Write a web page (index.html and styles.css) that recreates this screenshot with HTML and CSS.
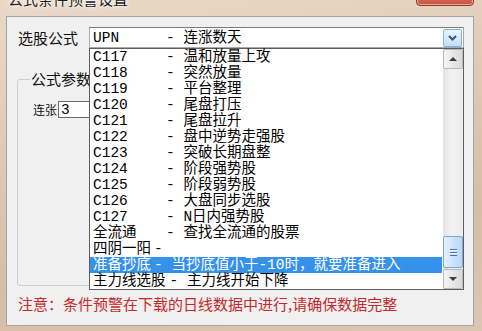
FILE: index.html
```html
<!DOCTYPE html>
<html lang="zh-CN">

<head>
  <meta charset="UTF-8">
  <title>公式条件预警设置</title>
  <link rel="stylesheet" href="styles.css">
</head>

<body>
  <div class="frame">
    <div class="titlebar">
      <span class="title">公式条件预警设置</span>
      <span class="close"></span>
    </div>

    <div class="client">
      <div class="formula-row">
        <span class="label">选股公式</span>
        <div class="combo">
          <span class="value"><span class="n">UPN</span>- 连涨数天</span>
          <span class="drop-btn">
            <svg width="9" height="6" viewBox="0 0 9 6"><path d="M1 1 L4.5 4.5 L8 1" fill="none" stroke="#3b5178" stroke-width="2"/></svg>
          </span>

          <div class="droplist">
            <ul class="items">
              <li><span class="n">C117</span>- 温和放量上攻</li>
              <li><span class="n">C118</span>- 突然放量</li>
              <li><span class="n">C119</span>- 平台整理</li>
              <li><span class="n">C120</span>- 尾盘打压</li>
              <li><span class="n">C121</span>- 尾盘拉升</li>
              <li><span class="n">C122</span>- 盘中逆势走强股</li>
              <li><span class="n">C123</span>- 突破长期盘整</li>
              <li><span class="n">C124</span>- 阶段强势股</li>
              <li><span class="n">C125</span>- 阶段弱势股</li>
              <li><span class="n">C126</span>- 大盘同步选股</li>
              <li><span class="n">C127</span>- N日内强势股</li>
              <li><span class="n">全流通</span>- 查找全流通的股票</li>
              <li><span class="n free">四阴一阳</span>-</li>
              <li class="selected"><span class="n free">准备抄底</span>- 当抄底值小于-10时，就要准备进入</li>
              <li><span class="n free wide">主力线选股</span>- 主力线开始下降</li>
            </ul>
            <div class="scroll">
              <span class="sbtn"><span class="arrow up"></span></span>
              <div class="track">
                <span class="thumb"><span class="grip"></span></span>
              </div>
              <span class="sbtn"><span class="arrow down"></span></span>
            </div>
          </div>
        </div>
      </div>

      <fieldset class="params">
        <legend>公式参数</legend>
        <div class="param-row">
          <span class="small-label">连张</span>
          <input type="text" class="param-input" value="3">
        </div>
      </fieldset>

      <p class="note">注意：条件预警在下载的日线数据中进行,请确保数据完整</p>
    </div>
  </div>
</body>

</html>
```

FILE: styles.css
```css
body {
  margin: 0;
  width: 482px;
  height: 331px;
  overflow: hidden;
  font-family: "Noto Sans CJK SC", sans-serif;
  background: linear-gradient(170deg, #ead9c7 0%, #dfc8b4 40%, #d6bda7 70%, #dcc6b3 100%);
}

.frame {
  padding: 0 8px 0 6px;
}

.titlebar {
  height: 16px;
  display: flex;
  justify-content: space-between;
  align-items: flex-start;
}

.title {
  margin: -9px 0 0 2px;
  font-size: 15px;
  line-height: 16px;
  color: #1c1c1c;
  text-shadow: 0 0 6px #fff, 0 0 3px #fff;
}

.close {
  width: 58px;
  height: 20px;
  margin-top: -14px;
  box-sizing: border-box;
  border: 1px solid #8c3a2c;
  border-radius: 0 0 4px 4px;
  background: linear-gradient(#e08c74, #c9533e);
  box-shadow: inset 0 0 0 1px #eaa995;
}

.client {
  height: 310px;
  box-sizing: border-box;
  border: 1px solid #a4a4a4;
  background: #f0f0f0;
  padding: 10px 0 0 11px;
}

.formula-row {
  display: flex;
  align-items: center;
  gap: 11px;
}

.label {
  font-size: 15px;
  line-height: 16px;
  width: 60px;
  color: #111;
}

.combo {
  position: relative;
  width: 375px;
  height: 21px;
  box-sizing: border-box;
  border: 1px solid #a9a9a9;
  border-top-color: #7c7c7c;
  background: #fff;
  display: flex;
  align-items: center;
}

.value,
.items li {
  font-family: "Liberation Mono", "Noto Sans CJK SC", monospace;
  font-size: 14.5px;
  line-height: 16px;
  white-space: pre;
  color: #000;
}

.value {
  flex: 1;
  padding-left: 3px;
  display: flex;
}

.n {
  width: 73px;
}

.n.free {
  width: auto;
  margin-right: 3px;
}

.n.wide {
  margin-right: 4px;
}

.drop-btn {
  width: 19px;
  height: 18px;
  margin-right: 1px;
  box-sizing: border-box;
  border: 1px solid #7fb1e0;
  border-radius: 2px;
  background: linear-gradient(#eaf5fe, #c3dff7);
  display: flex;
  align-items: center;
  justify-content: center;
}

.droplist {
  position: absolute;
  top: 20px;
  left: -1px;
  width: 375px;
  height: 242px;
  box-sizing: border-box;
  border: 1px solid #5e5e5e;
  background: #fff;
  display: flex;
  z-index: 2;
}

.items {
  flex: 1;
  margin: 0;
  padding: 0;
  list-style: none;
}

.items li {
  height: 16px;
  padding-left: 3px;
  display: flex;
}

.items li.selected {
  background: #3591ea;
  color: #fff;
  margin-right: 1px;
}

.scroll {
  width: 20px;
  display: flex;
  flex-direction: column;
  background: linear-gradient(90deg, #e2e2e2, #f2f2f2 40%, #ececec);
}

.sbtn {
  height: 20px;
  box-sizing: border-box;
  border: 1px solid #b9b9b9;
  border-radius: 2px;
  background: linear-gradient(90deg, #f5f5f5, #e4e4e4 60%, #d9d9d9);
  display: flex;
  align-items: center;
  justify-content: center;
}

.arrow {
  width: 0;
  height: 0;
  border-left: 4px solid transparent;
  border-right: 4px solid transparent;
}

.arrow.up {
  border-bottom: 4px solid #3c3c3c;
}

.arrow.down {
  border-top: 4px solid #3c3c3c;
}

.track {
  flex: 1;
  display: flex;
  flex-direction: column;
  justify-content: flex-end;
  padding-bottom: 1px;
}

.thumb {
  height: 32px;
  box-sizing: border-box;
  border: 1px solid #7fa6d2;
  border-radius: 2px;
  background: linear-gradient(90deg, #e4f2fd, #cbe4f9 50%, #b7d8f5);
  display: flex;
  align-items: center;
  justify-content: center;
}

.grip {
  width: 7px;
  height: 7px;
  background: repeating-linear-gradient(#4d6fa3 0 1px, #eef7ff 1px 2px, transparent 2px 3px);
}

.params {
  margin: 23px 0 0 -1px;
  width: 438px;
  height: 215px;
  box-sizing: border-box;
  border: 1px solid #c7cfd5;
  border-radius: 3px;
  padding: 14px 0 0 15px;
}

.params legend {
  margin-left: -3px;
  padding: 0 1px;
  font-size: 15px;
  line-height: 16px;
  color: #111;
}

.param-row {
  display: flex;
  align-items: center;
  gap: 1px;
}

.small-label {
  font-size: 12px;
  line-height: 16px;
  color: #111;
}

.param-input {
  width: 60px;
  height: 17px;
  box-sizing: border-box;
  border: 1px solid #6a6a6a;
  padding: 0 2px;
  font-family: "Liberation Mono", monospace;
  font-size: 14.5px;
  background: #fff;
}

.note {
  margin: 9px 0 0;
  font-size: 15px;
  line-height: 18px;
  color: #c42a2a;
}
```
